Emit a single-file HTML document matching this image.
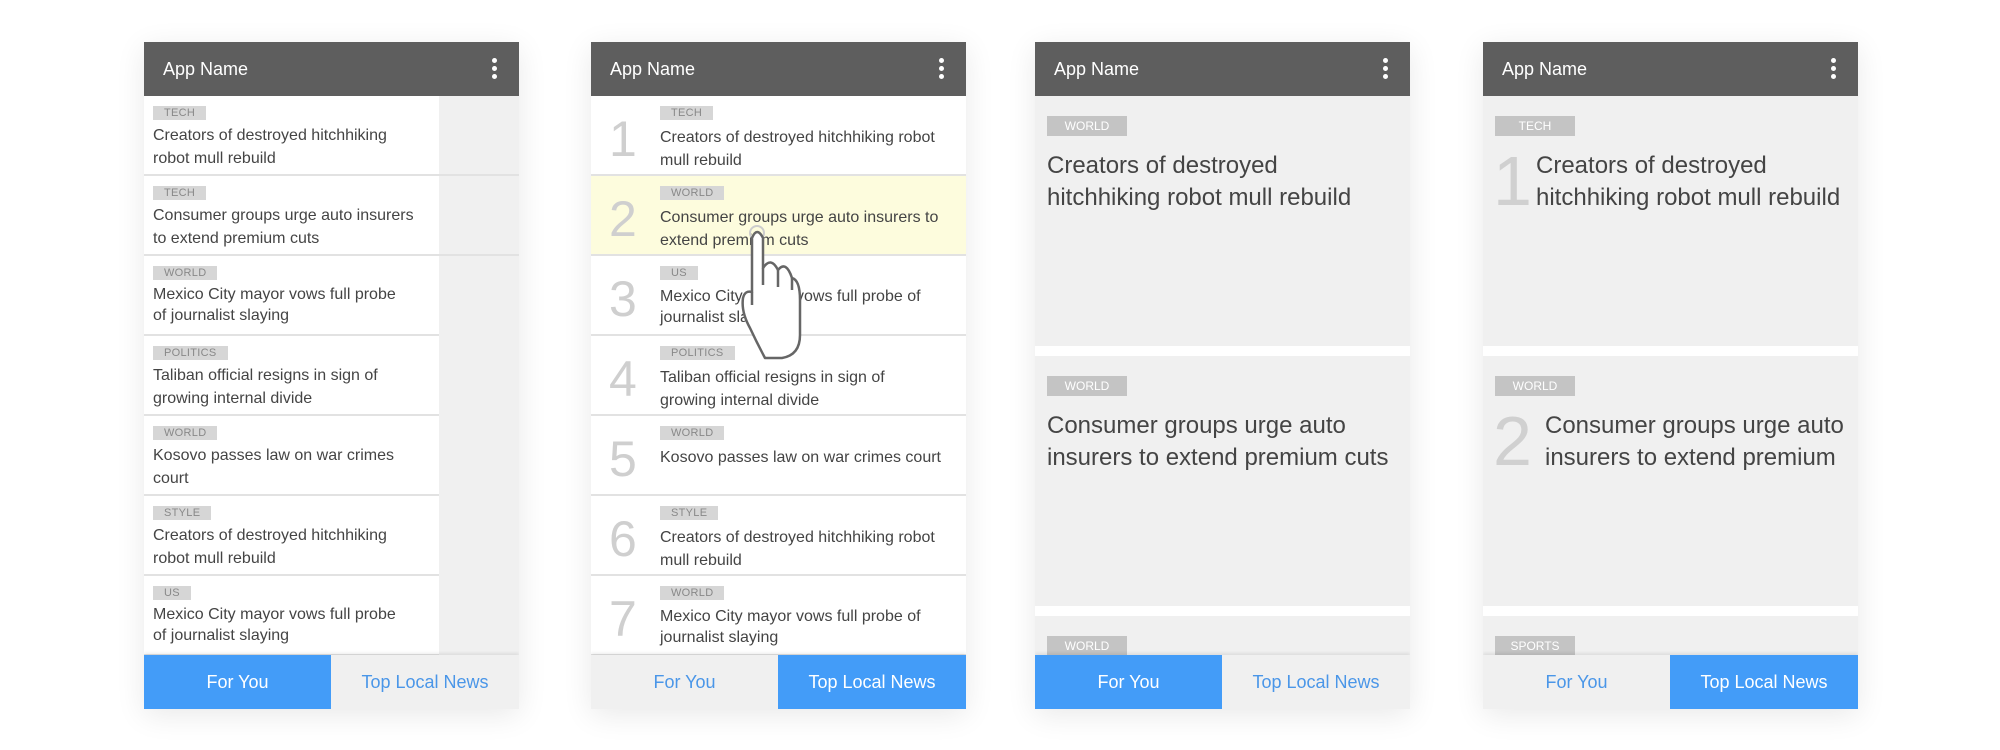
<!DOCTYPE html>
<html><head><meta charset="utf-8"><style>
*{margin:0;padding:0;box-sizing:border-box}
html{overflow:hidden;width:2000px;height:750px}
body{width:2000px;height:750px;background:#fff;position:relative;overflow:hidden;font-family:"Liberation Sans",sans-serif}
.ph{position:absolute;top:42px;width:375px;height:667px;background:#f0f0f0;box-shadow:0 6px 28px rgba(0,0,0,.09);overflow:hidden}
.hd{position:absolute;top:0;left:0;width:375px;height:54px;background:#5e5e5e;color:#fff;font-size:18px;line-height:54px;padding-left:19px;z-index:3}
.dots{position:absolute;right:22px;top:16px;width:5px}
.dots i{display:block;width:5px;height:5px;border-radius:50%;background:#fff;margin-bottom:3px}
.tb{position:absolute;bottom:0;left:0;width:375px;height:54px;display:flex;z-index:3;box-shadow:0 -2px 3px rgba(0,0,0,.08)}
.tb div{flex:0 0 187px;text-align:center;line-height:54px;font-size:18px;background:#f0f0f0;color:#4a96e8}
.tb div+div{flex:1}
.tb .on{background:#439cf8;color:#fff}
.row{position:absolute;left:0;height:80px;background:#fff;border-bottom:2px solid #e2e2e2}
.tag{position:absolute;height:14px;background:#d6d6d6;color:#888;font-size:11px;line-height:14px;padding:0 11px;letter-spacing:.3px}
.tt{position:absolute;font-size:16px;line-height:23px;color:#444}
.num{position:absolute;left:18px;font-size:50px;color:#cfcfcf;font-weight:300;line-height:50px}
.card{position:absolute;left:0;width:375px;height:250px;background:#f0f0f0}
.gap{position:absolute;left:0;width:375px;height:10px;background:#fff}
.btag{position:absolute;left:12px;top:20px;width:80px;height:20px;background:#c4c4c4;color:#fff;font-size:12px;line-height:20px;text-align:center}
.bt{position:absolute;left:12px;top:54px;font-size:24px;line-height:32px;color:#444;width:350px}
.bn{position:absolute;left:10px;top:50px;font-size:70px;line-height:70px;color:#d0d0d0}
</style></head><body>

<!-- phone 1 -->
<div class="ph" style="left:144px">
<div class="hd">App Name<div class="dots"><i></i><i></i><i></i></div></div>
<div style="position:absolute;top:54px;left:0">
<div class="row" style="top:0;width:295px"><span class="tag" style="left:9px;top:10px">TECH</span><div class="tt" style="left:9px;top:28px;width:260px">Creators of destroyed hitchhiking robot mull rebuild</div></div>
<div class="row" style="top:80px;width:295px"><span class="tag" style="left:9px;top:10px">TECH</span><div class="tt" style="left:9px;top:28px;width:265px">Consumer groups urge auto insurers to extend premium cuts</div></div>
<div class="row" style="top:160px;width:295px"><span class="tag" style="left:9px;top:10px">WORLD</span><div class="tt" style="left:9px;top:28px;width:260px;line-height:21px">Mexico City mayor vows full probe of journalist slaying</div></div>
<div class="row" style="top:240px;width:295px"><span class="tag" style="left:9px;top:10px">POLITICS</span><div class="tt" style="left:9px;top:28px;width:260px">Taliban official resigns in sign of growing internal divide</div></div>
<div class="row" style="top:320px;width:295px"><span class="tag" style="left:9px;top:10px">WORLD</span><div class="tt" style="left:9px;top:28px;width:260px">Kosovo passes law on war crimes court</div></div>
<div class="row" style="top:400px;width:295px"><span class="tag" style="left:9px;top:10px">STYLE</span><div class="tt" style="left:9px;top:28px;width:260px">Creators of destroyed hitchhiking robot mull rebuild</div></div>
<div class="row" style="top:480px;width:295px"><span class="tag" style="left:9px;top:10px">US</span><div class="tt" style="left:9px;top:28px;width:260px;line-height:21px">Mexico City mayor vows full probe of journalist slaying</div></div>
</div>
<div style="position:absolute;left:295px;top:54px;width:80px;height:560px;background:#f0f0f0"></div>
<div style="position:absolute;left:295px;top:132px;width:80px;height:2px;background:#e2e2e2"></div>
<div style="position:absolute;left:295px;top:212px;width:80px;height:2px;background:#e2e2e2"></div>
<div class="tb"><div class="on">For You</div><div>Top Local News</div></div>
</div>

<!-- phone 2 -->
<div class="ph" style="left:591px">
<div class="hd">App Name<div class="dots"><i></i><i></i><i></i></div></div>
<div style="position:absolute;top:54px;left:0">
<div class="row" style="top:0;width:375px"><span class="num" style="top:18px">1</span><span class="tag" style="left:69px;top:10px">TECH</span><div class="tt" style="left:69px;top:30px;width:300px">Creators of destroyed hitchhiking robot mull rebuild</div></div>
<div class="row" style="top:80px;width:375px;background:#fdfcdd"><span class="num" style="top:18px">2</span><span class="tag" style="left:69px;top:10px">WORLD</span><div class="tt" style="left:69px;top:30px;width:300px">Consumer groups urge auto insurers to extend premium cuts</div></div>
<div class="row" style="top:160px;width:375px"><span class="num" style="top:18px">3</span><span class="tag" style="left:69px;top:10px">US</span><div class="tt" style="left:69px;top:30px;width:290px;line-height:21px">Mexico City mayor vows full probe of journalist slaying</div></div>
<div class="row" style="top:240px;width:375px"><span class="num" style="top:18px">4</span><span class="tag" style="left:69px;top:10px">POLITICS</span><div class="tt" style="left:69px;top:30px;width:260px">Taliban official resigns in sign of growing internal divide</div></div>
<div class="row" style="top:320px;width:375px"><span class="num" style="top:18px">5</span><span class="tag" style="left:69px;top:10px">WORLD</span><div class="tt" style="left:69px;top:30px;width:300px">Kosovo passes law on war crimes court</div></div>
<div class="row" style="top:400px;width:375px"><span class="num" style="top:18px">6</span><span class="tag" style="left:69px;top:10px">STYLE</span><div class="tt" style="left:69px;top:30px;width:300px">Creators of destroyed hitchhiking robot mull rebuild</div></div>
<div class="row" style="top:480px;width:375px"><span class="num" style="top:18px">7</span><span class="tag" style="left:69px;top:10px">WORLD</span><div class="tt" style="left:69px;top:30px;width:290px;line-height:21px">Mexico City mayor vows full probe of journalist slaying</div></div>
</div>
<div class="tb"><div>For You</div><div class="on">Top Local News</div></div>
</div>

<!-- phone 3 -->
<div class="ph" style="left:1035px">
<div class="hd">App Name<div class="dots"><i></i><i></i><i></i></div></div>
<div class="card" style="top:54px"><span class="btag">WORLD</span><div class="bt">Creators of destroyed hitchhiking robot mull rebuild</div></div>
<div class="gap" style="top:304px"></div>
<div class="card" style="top:314px"><span class="btag">WORLD</span><div class="bt">Consumer groups urge auto insurers to extend premium cuts</div></div>
<div class="gap" style="top:564px"></div>
<div class="card" style="top:574px"><span class="btag">WORLD</span></div>
<div class="tb"><div class="on">For You</div><div>Top Local News</div></div>
</div>

<!-- phone 4 -->
<div class="ph" style="left:1483px">
<div class="hd">App Name<div class="dots"><i></i><i></i><i></i></div></div>
<div class="card" style="top:54px"><span class="btag">TECH</span><span class="bn">1</span><div class="bt" style="left:53px;width:320px">Creators of destroyed hitchhiking robot mull rebuild</div></div>
<div class="gap" style="top:304px"></div>
<div class="card" style="top:314px"><span class="btag">WORLD</span><span class="bn">2</span><div class="bt" style="left:62px;width:310px;height:64px;overflow:hidden">Consumer groups urge auto insurers to extend premium cuts</div></div>
<div class="gap" style="top:564px"></div>
<div class="card" style="top:574px"><span class="btag">SPORTS</span></div>
<div class="tb"><div>For You</div><div class="on">Top Local News</div></div>
</div>

<svg style="position:absolute;left:0;top:0" width="2000" height="750">
<circle cx="757" cy="233" r="7" fill="none" stroke="#ccc" stroke-width="2"/>
<path d="M752 292 L752 238 Q757 226 763 238 L763 268 Q771 256 778 270 Q786 260 792 278 Q800 280 800 300 L800 335 Q800 355 782 358 L765 358 Q757 343 750 328 Q741 312 743 298 Q745 290 752 292 Z" fill="#fff" stroke="#666" stroke-width="2.5" stroke-linejoin="round"/>
<path d="M763 268 L763 285 M778 270 L778 287 M792 278 L792 290 M752 292 L752 305" stroke="#666" stroke-width="2.5" fill="none"/>
</svg>
</body></html>
